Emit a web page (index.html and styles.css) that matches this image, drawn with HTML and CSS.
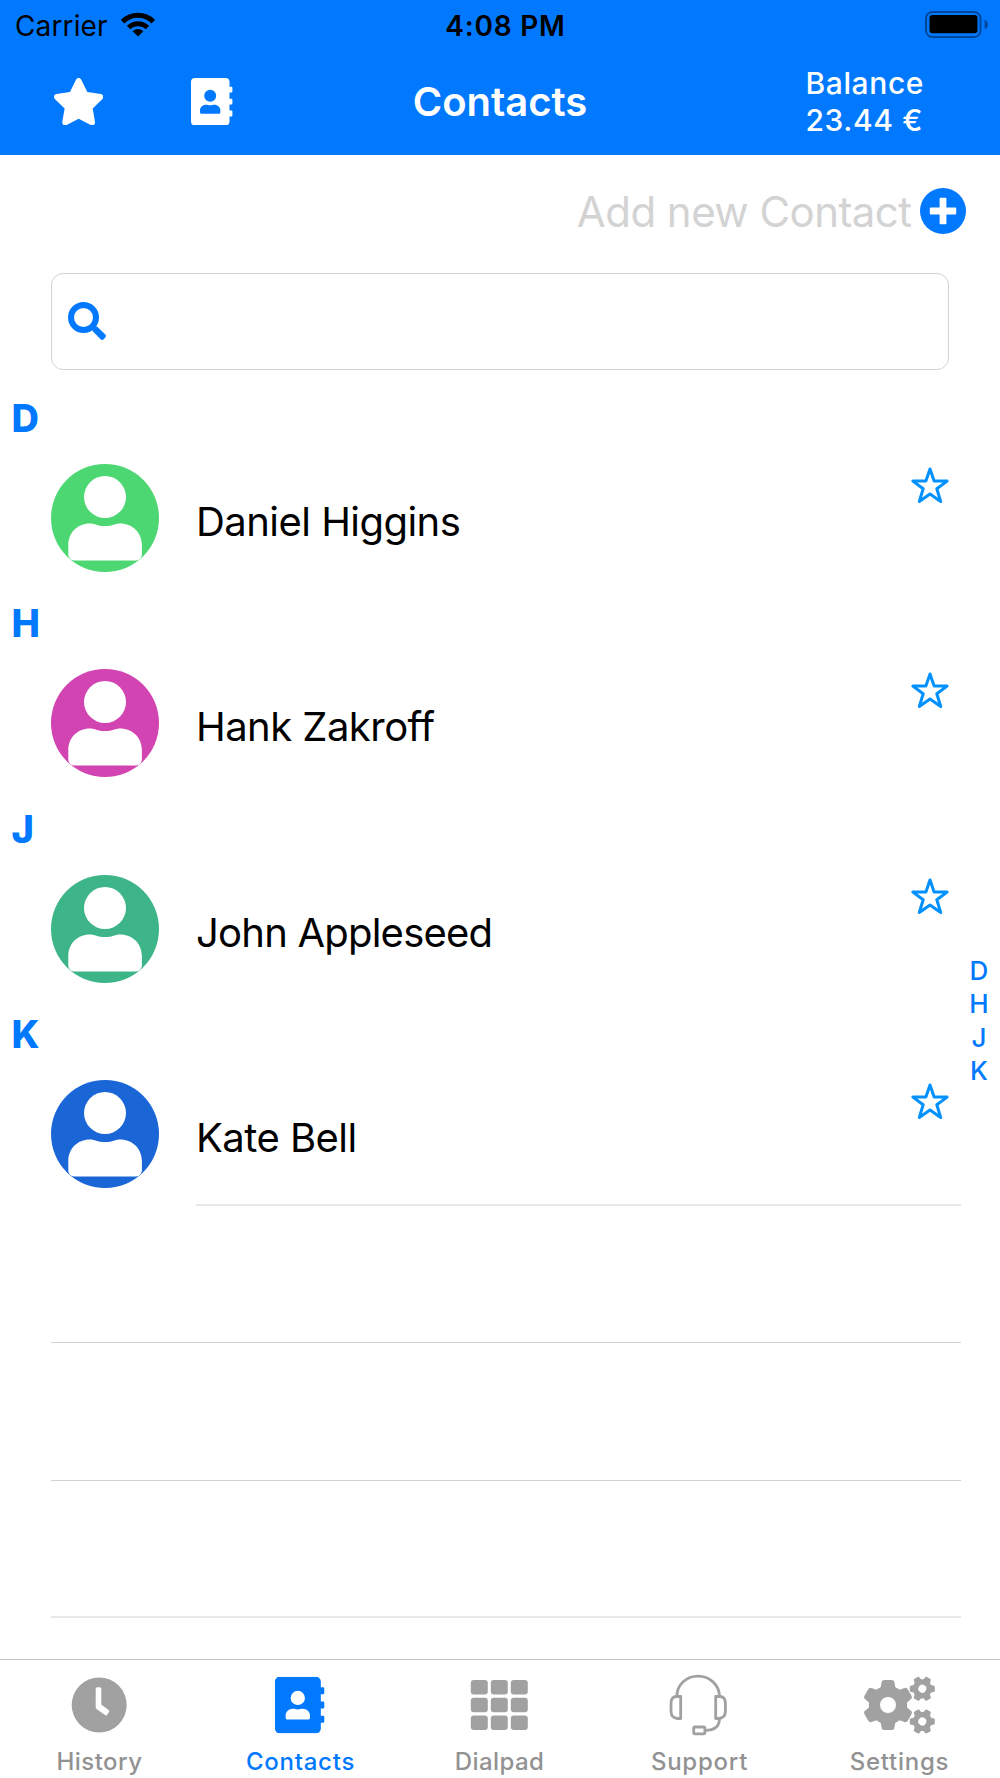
FILE: index.html
```html
<!DOCTYPE html>
<html lang="en">
<head>
<meta charset="utf-8">
<title>Contacts</title>
<link rel="stylesheet" href="styles.css">
</head>
<body>
<svg class="sprite" aria-hidden="true">
  <symbol id="book" viewBox="0 0 42 47.4">
    <path fill-rule="evenodd" d="M4 0H34.5a4 4 0 0 1 4 4V8.8H40.4q1 0 1 1V13.6q0 1-1 1H38.5V20.7H40.4q1 0 1 1V25.5q0 1-1 1H38.5V32.6H40.4q1 0 1 1V37.4q0 1-1 1H38.5V43.4a4 4 0 0 1-4 4H4a4 4 0 0 1-4-4V4a4 4 0 0 1 4-4ZM19.2 11.7a6 6 0 1 0 0 12 6 6 0 0 0 0-12ZM15 26.7c-3.4 0-6 2.6-6 5.700V34.200q0 1.600 1.600 1.600H27.800q1.600 0 1.600-1.600V32.400c0-3.100-2.600-5.700-6-5.700-1.800 0-2.400.6-4.200.6s-2.400-.6-4.200-.6Z"/>
  </symbol>
  <symbol id="person" viewBox="0 0 108 108">
    <circle cx="54" cy="33" r="21"/>
    <path d="M39 59.400C26 59.400 17.300 69 17.300 81V91Q18 96.500 24 96.500H84.500Q90 96.500 90.900 91V81C90.900 69 82 59.400 69 59.400 64 59.400 62 62 54 62S44 59.400 39 59.400Z"/>
  </symbol>
  <symbol id="star-outline" viewBox="0 0 38 37">
    <path d="M19 2 23.100 14.100H36.100L25.800 21.700 29.700 34.500 19 27 8.300 34.500 12.200 21.700 1.900 14.100H14.900Z"/>
  </symbol>
</svg>

<div class="screen">
  <header class="header">
    <div class="status">
      <div class="carrier">
        <span>Carrier</span>
        <svg class="wifi" viewBox="0 0 34 25">
          <path d="M1.700 9.700A21.600 21.600 0 0 1 32.300 9.700" fill="none" stroke="#000" stroke-width="5"/>
          <path d="M7.500 15.600A13.400 13.400 0 0 1 26.500 15.600" fill="none" stroke="#000" stroke-width="5"/>
          <path d="M17 24.500 11.700 19.200A7.500 7.500 0 0 1 22.300 19.200Z"/>
        </svg>
      </div>
      <span class="time">4:08 PM</span>
      <svg class="battery" viewBox="0 0 63 28">
        <rect x="1" y="1" width="54.500" height="25" rx="6.500" fill="none" stroke="#00479a" stroke-width="2"/>
        <rect x="4.500" y="4" width="48" height="18.300" rx="3"/>
        <path d="M59.600 8.700Q62.800 10 62.800 13.500T59.600 18.300Z" fill="#00479a"/>
      </svg>
    </div>
    <nav class="navbar">
      <div class="nav-icons">
        <svg class="star" viewBox="21 0 534 512"><path d="M259.300 17.800L194 150.200 47.900 171.500c-26.200 3.800-36.700 36.100-17.700 54.600l105.700 103-25 145.500c-4.500 26.300 23.200 46 46.400 33.700L288 439.600l130.700 68.700c23.200 12.200 50.900-7.400 46.400-33.700l-25-145.500 105.700-103c19-18.500 8.500-50.800-17.700-54.600L382 150.200 316.700 17.800c-11.700-23.600-45.600-23.900-57.400 0z"/></svg>
        <svg class="nav-book"><use href="#book"/></svg>
      </div>
      <h1 class="title">Contacts</h1>
      <div class="balance">Balance<br>23.44 €</div>
    </nav>
  </header>

  <main class="content">
    <div class="add">
      <span>Add new Contact</span>
      <svg class="plus" viewBox="0 0 46 46"><circle cx="23" cy="23" r="23" fill="#0079ff"/><path d="M20.600 9.800h4.800q1 0 1 1v8.800h8.800q1 0 1 1v4.800q0 1-1 1h-8.800v8.800q0 1-1 1h-4.800q-1 0-1-1v-8.800h-8.800q-1 0-1-1v-4.800q0-1 1-1h8.800v-8.800q0-1 1-1Z" fill="#fff"/></svg>
    </div>
    <div class="search">
      <svg class="magnifier" viewBox="0 0 39 39"><circle cx="15.500" cy="15.500" r="12.500" fill="none" stroke="#0079ff" stroke-width="6"/><path d="M29 24.500 37.300 32.600Q38.700 34.100 37.300 35.600L35.600 37.300Q34.100 38.700 32.600 37.300L24.500 29V27L27 24.500Z" fill="#0079ff"/></svg>
    </div>

    <section class="group">
      <h2 class="letter">D</h2>
      <div class="contact">
        <svg class="avatar green"><use href="#person"/></svg>
        <span class="name">Daniel Higgins</span>
        <svg class="fav"><use href="#star-outline"/></svg>
      </div>
    </section>
    <section class="group">
      <h2 class="letter">H</h2>
      <div class="contact">
        <svg class="avatar pink"><use href="#person"/></svg>
        <span class="name">Hank Zakroff</span>
        <svg class="fav"><use href="#star-outline"/></svg>
      </div>
    </section>
    <section class="group">
      <h2 class="letter">J</h2>
      <div class="contact">
        <svg class="avatar teal"><use href="#person"/></svg>
        <span class="name name-john">John Appleseed</span>
        <svg class="fav"><use href="#star-outline"/></svg>
      </div>
    </section>
    <section class="group">
      <h2 class="letter">K</h2>
      <div class="contact">
        <svg class="avatar blue"><use href="#person"/></svg>
        <span class="name">Kate Bell</span>
        <svg class="fav"><use href="#star-outline"/></svg>
      </div>
    </section>
    <div class="separator"></div>
    <div class="empty"></div>
    <div class="empty"></div>
    <div class="empty"></div>

    <div class="index"><span>D</span><span>H</span><span>J</span><span>K</span></div>
  </main>

  <footer class="tabs">
    <div class="tab">
      <svg viewBox="0 0 80 64"><circle cx="39.200" cy="32" r="27.500"/><path d="M37.200 14.200h2.600q1.500 0 1.500 1.500V31.500L48.500 37Q49.800 38 48.800 39.200L47.200 41.700Q46.300 43 45 42L36.500 36Q35.700 35.300 35.700 34V15.700q0-1.500 1.500-1.500Z" fill="#fff"/></svg>
      <span>History</span>
    </div>
    <div class="tab active">
      <svg viewBox="0 0 80 64"><use href="#book" x="14.900" y="3.800" width="50.100" height="56.600"/></svg>
      <span class="wide">Contacts</span>
    </div>
    <div class="tab">
      <svg viewBox="0 0 80 64"><g><rect x="10.800" y="7" width="17" height="14.500" rx="3"/><rect x="30.800" y="7" width="17" height="14.500" rx="3"/><rect x="50.800" y="7" width="17" height="14.500" rx="3"/><rect x="10.800" y="24.700" width="17" height="14.500" rx="3"/><rect x="30.800" y="24.700" width="17" height="14.500" rx="3"/><rect x="50.800" y="24.700" width="17" height="14.500" rx="3"/><rect x="10.800" y="42.400" width="17" height="14.500" rx="3"/><rect x="30.800" y="42.400" width="17" height="14.500" rx="3"/><rect x="50.800" y="42.400" width="17" height="14.500" rx="3"/></g></svg>
      <span>Dialpad</span>
    </div>
    <div class="tab">
      <svg viewBox="0 0 80 64"><g fill="none" stroke="#a1a1a1" stroke-width="2.800" stroke-linejoin="round"><path d="M16.800 23.500C17 11.500 26.500 3.200 38 3.200S59.300 11.500 59.500 23.500"/><path d="M20.700 23.500V45.500H17.500Q11 45 11 38V30.500Q11 24 16 23.500Z"/><path d="M55.700 23.500V45.500H58.900Q65.400 45 65.400 38V30.500Q65.400 24 60.400 23.500Z"/><path d="M59.500 45.500Q59.500 57.500 45 57.300"/><rect x="33.700" y="54" width="11.200" height="6.800" rx="1.200"/></g></svg>
      <span class="wide">Support</span>
    </div>
    <div class="tab">
      <svg viewBox="0 0 80 64">
        <defs>
          <path id="tooth" d="M-7.500-17-6.500-22Q-6.500-25-3.500-25H3.500Q6.500-25 6.500-22L7.500-17Z"/>
          <g id="gear">
            <circle r="13.600" fill="none" stroke="#a1a1a1" stroke-width="11.200"/>
            <use href="#tooth"/><use href="#tooth" transform="rotate(60)"/><use href="#tooth" transform="rotate(120)"/><use href="#tooth" transform="rotate(180)"/><use href="#tooth" transform="rotate(240)"/><use href="#tooth" transform="rotate(300)"/>
          </g>
        </defs>
        <use href="#gear" transform="translate(28 32)"/>
        <use href="#gear" transform="translate(62.300 15.800) rotate(30) scale(.5)"/>
        <use href="#gear" transform="translate(62.300 48.500) rotate(30) scale(.5)"/>
      </svg>
      <span class="wide">Settings</span>
    </div>
  </footer>
</div>
</body>
</html>
```
FILE: styles.css
```css
* { box-sizing: border-box; margin: 0; padding: 0; }

body {
  background: #fff;
  color: #000;
  font-family: Inter, "Liberation Sans", sans-serif;
}

.sprite { display: block; width: 0; height: 0; }

.screen {
  display: flex;
  flex-direction: column;
  width: 1000px;
  height: 1778px;
  overflow: hidden;
}

.screen svg { display: block; flex: none; }

/* Header */
.header {
  flex: none;
  height: 155px;
  background: #0079ff;
}

.status {
  display: grid;
  grid-template-columns: 1fr auto 1fr;
  height: 50px;
  padding: 0 12px 0 15px;
  font-size: 28px;
  line-height: 52px;
}

.carrier { display: flex; gap: 13px; letter-spacing: 0.13px; }
.wifi { width: 34px; height: 25px; margin-top: 12px; }
.time { padding-left: 8px; font-weight: 600; letter-spacing: 0.8px; }
.battery { width: 63px; height: 28px; margin-top: 11px; justify-self: end; }

.navbar {
  display: grid;
  grid-template-columns: 1fr auto 1fr;
  align-items: center;
  height: 103px;
  color: #fff;
}

.nav-icons { display: flex; gap: 87.500px; padding-left: 54px; fill: #fff; }
.star { width: 49.300px; height: 47.400px; }
.nav-book { width: 42px; height: 47.400px; }
.title { font-size: 40px; font-weight: 600; line-height: 48px; }

.balance {
  justify-self: end;
  width: 194.500px;
  font-size: 30px;
  font-weight: 450;
  letter-spacing: 0.6px;
  line-height: 37px;
}

/* Contact list */
.content {
  position: relative;
  flex: 1;
  min-height: 0;
}

.add {
  display: flex;
  align-items: center;
  justify-content: flex-end;
  gap: 8px;
  height: 112px;
  padding-right: 34.500px;
  color: #d3d3d3;
  font-size: 42px;
  letter-spacing: -0.550px;
}

.plus { width: 46px; height: 46px; }

.search {
  display: flex;
  height: 97px;
  margin: 6px 51px 14px;
  padding: 28px 16px;
  border: 1px solid #d4d4d4;
  border-radius: 12px;
}

.magnifier { width: 39px; height: 39px; }

.letter {
  height: 68px;
  padding-left: 11.500px;
  color: #0079ff;
  font-size: 38px;
  font-weight: 800;
  line-height: 68px;
}

.contact {
  display: flex;
  height: 137.330px;
  padding: 12px 51px 0 51px;
}

.avatar {
  width: 108px;
  height: 108px;
  border-radius: 50%;
  fill: #fff;
}

.green { background: #4cd772; }
.pink { background: #d144b1; }
.teal { background: #3db588; }
.blue { background: #1b66d7; }

.name {
  flex: 1;
  padding-left: 37px;
  font-size: 40px;
  letter-spacing: -0.540px;
  line-height: 115px;
}

.name-john { letter-spacing: -0.780px; }

.fav {
  width: 38px;
  height: 37px;
  margin-top: 3px;
  fill: none;
  stroke: #0091ff;
  stroke-width: 3;
  stroke-linejoin: round;
}

.separator { height: 2px; margin: -1px 39px -1px 196px; background: #e8e8e8; }

.empty {
  height: 137.600px;
  margin: 0 39px 0 51px;
  border-bottom: 1px solid #d2d2d2;
}

.empty:nth-last-child(2) { border-bottom: 2px solid #e8e8e8; }

.index {
  position: absolute;
  top: 799px;
  right: 10px;
  display: flex;
  flex-direction: column;
  align-items: center;
  width: 22px;
  color: #0079ff;
  font-size: 26px;
  font-weight: 550;
  line-height: 33.330px;
}

/* Tab bar */
.tabs {
  display: grid;
  grid-template-columns: repeat(5, 1fr);
  flex: none;
  height: 119px;
  padding-top: 13px;
  border-top: 1px solid #c4c4c4;
  background: #fff;
}

.tab {
  display: flex;
  flex-direction: column;
  align-items: center;
  color: #929292;
  fill: #a1a1a1;
  font-size: 24px;
  font-weight: 450;
  letter-spacing: 0.450px;
  line-height: 50px;
}

.tab svg { width: 80px; height: 64px; }
.tab span { margin-left: -1px; }
.tab.active { color: #0079ff; fill: #0079ff; }
.tab.active span { margin-left: 1px; }
.wide { letter-spacing: 0.750px; }
```
